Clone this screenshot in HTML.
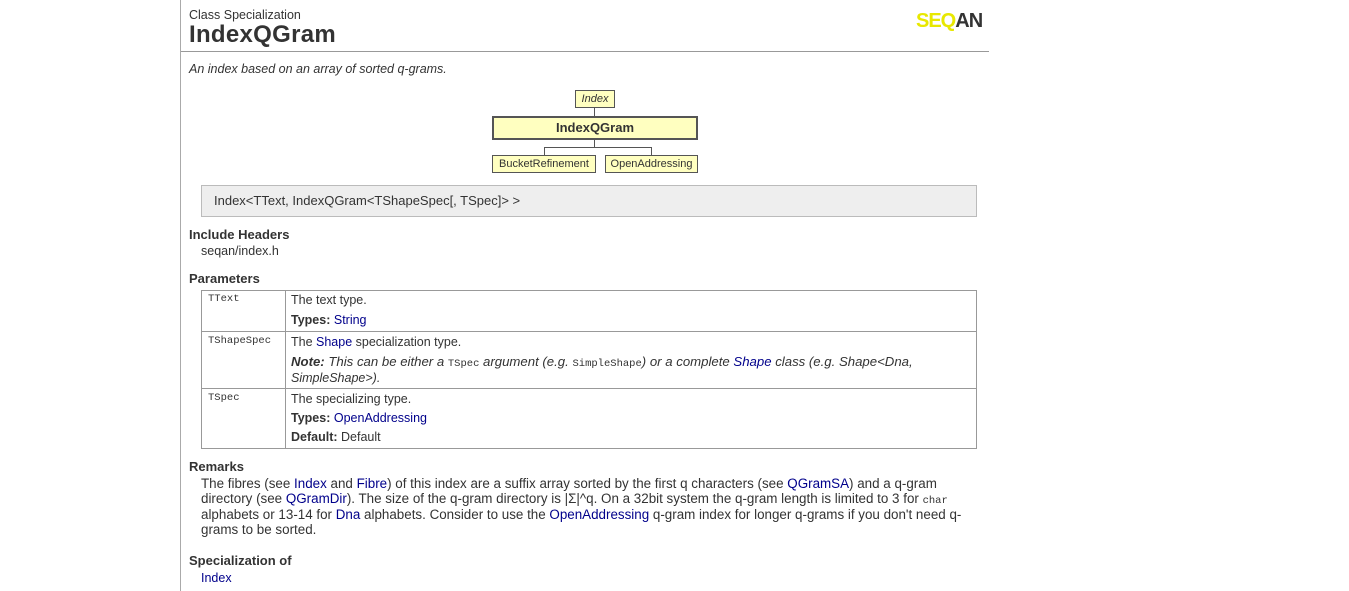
<!DOCTYPE html>
<html><head><meta charset="utf-8"><style>
body{margin:0;width:1349px;height:591px;background:#fff;font-family:"Liberation Sans",sans-serif;font-size:12.5px;color:#333;position:relative;overflow:hidden}
.a{position:absolute;white-space:nowrap}
a{color:#00008b;text-decoration:none}
b{color:#333}
.m{font-family:"Liberation Mono",monospace;font-size:10.5px}
.bx{position:absolute;background:#ffffc0;border:1px solid #555;box-sizing:border-box;text-align:center;font-size:11px}
.ln{position:absolute;background:#555}
.h{font-weight:bold;font-size:13px}
.r{font-size:13.4px}
</style></head><body>
<div style="position:absolute;left:180px;top:0;width:1px;height:591px;background:#aaa"></div>
<div class="a" style="left:189px;top:8px;font-size:12.5px">Class Specialization</div>
<div class="a" style="left:189px;top:21px;font-size:24px;font-weight:bold;letter-spacing:0.3px">IndexQGram</div>
<div class="a" style="left:916px;top:10px;font-size:20px;font-weight:bold;color:#e8e800;letter-spacing:-1px">SEQ<span style="color:#333">AN</span></div>
<div style="position:absolute;left:181px;top:51px;width:808px;height:1px;background:#999"></div>
<div class="a" style="left:189px;top:62px;font-style:italic">An index based on an array of sorted q-grams.</div>
<div class="bx" style="left:575px;top:90px;width:40px;height:18px;font-style:italic;line-height:16px">Index</div>
<div class="ln" style="left:594px;top:108px;width:1px;height:8px"></div>
<div class="bx" style="left:492px;top:116px;width:206px;height:24px;border-width:2px;font-weight:bold;font-size:13px;line-height:20px">IndexQGram</div>
<div class="ln" style="left:594px;top:140px;width:1px;height:7px"></div>
<div class="ln" style="left:544px;top:147px;width:108px;height:1px"></div>
<div class="ln" style="left:544px;top:147px;width:1px;height:8px"></div>
<div class="ln" style="left:651px;top:147px;width:1px;height:8px"></div>
<div class="bx" style="left:492px;top:155px;width:104px;height:18px;line-height:16px">BucketRefinement</div>
<div class="bx" style="left:605px;top:155px;width:93px;height:18px;line-height:16px">OpenAddressing</div>
<div style="position:absolute;left:201px;top:185px;width:776px;height:32px;box-sizing:border-box;background:#eee;border:1px solid #bbb"></div>
<div class="a" style="left:214px;top:193px;font-size:13px">Index&lt;TText, IndexQGram&lt;TShapeSpec[, TSpec]&gt; &gt;</div>
<div class="a h" style="left:189px;top:227px">Include Headers</div>
<div class="a" style="left:201px;top:244px">seqan/index.h</div>
<div class="a h" style="left:189px;top:271px">Parameters</div>
<div style="position:absolute;left:201px;top:290px;width:776px;height:159px;box-sizing:border-box;border:1px solid #999"></div>
<div class="ln" style="left:285px;top:290px;width:1px;height:159px;background:#999"></div>
<div class="ln" style="left:201px;top:331px;width:776px;height:1px;background:#999"></div>
<div class="ln" style="left:201px;top:388px;width:776px;height:1px;background:#999"></div>
<div class="a m" style="left:208px;top:293px">TText</div>
<div class="a" style="left:291px;top:293px">The text type.</div>
<div class="a" style="left:291px;top:313px"><b>Types:</b> <a>String</a></div>
<div class="a m" style="left:208px;top:335px">TShapeSpec</div>
<div class="a" style="left:291px;top:335px">The <a>Shape</a> specialization type.</div>
<div class="a" style="left:291px;top:354px;font-style:italic;font-size:13.2px"><b>Note:</b> This can be either a <span class="m" style="font-style:normal">TSpec</span> argument (e.g. <span class="m" style="font-style:normal">SimpleShape</span>) or a complete <a>Shape</a> class (e.g. Shape&lt;Dna,</div>
<div class="a" style="left:291px;top:371px;font-style:italic">SimpleShape&gt;).</div>
<div class="a m" style="left:208px;top:392px">TSpec</div>
<div class="a" style="left:291px;top:392px">The specializing type.</div>
<div class="a" style="left:291px;top:411px"><b>Types:</b> <a>OpenAddressing</a></div>
<div class="a" style="left:291px;top:430px"><b>Default:</b> Default</div>
<div class="a h" style="left:189px;top:459px">Remarks</div>
<div class="a r" style="left:201px;top:476px">The fibres (see <a>Index</a> and <a>Fibre</a>) of this index are a suffix array sorted by the first q characters (see <a>QGramSA</a>) and a q-gram</div>
<div class="a r" style="left:201px;top:491px">directory (see <a>QGramDir</a>). The size of the q-gram directory is |Σ|^q. On a 32bit system the q-gram length is limited to 3 for <span class="m">char</span></div>
<div class="a r" style="left:201px;top:507px">alphabets or 13-14 for <a>Dna</a> alphabets. Consider to use the <a>OpenAddressing</a> q-gram index for longer q-grams if you don't need q-</div>
<div class="a r" style="left:201px;top:522px">grams to be sorted.</div>
<div class="a h" style="left:189px;top:553px">Specialization of</div>
<div class="a" style="left:201px;top:571px"><a>Index</a></div>
</body></html>
